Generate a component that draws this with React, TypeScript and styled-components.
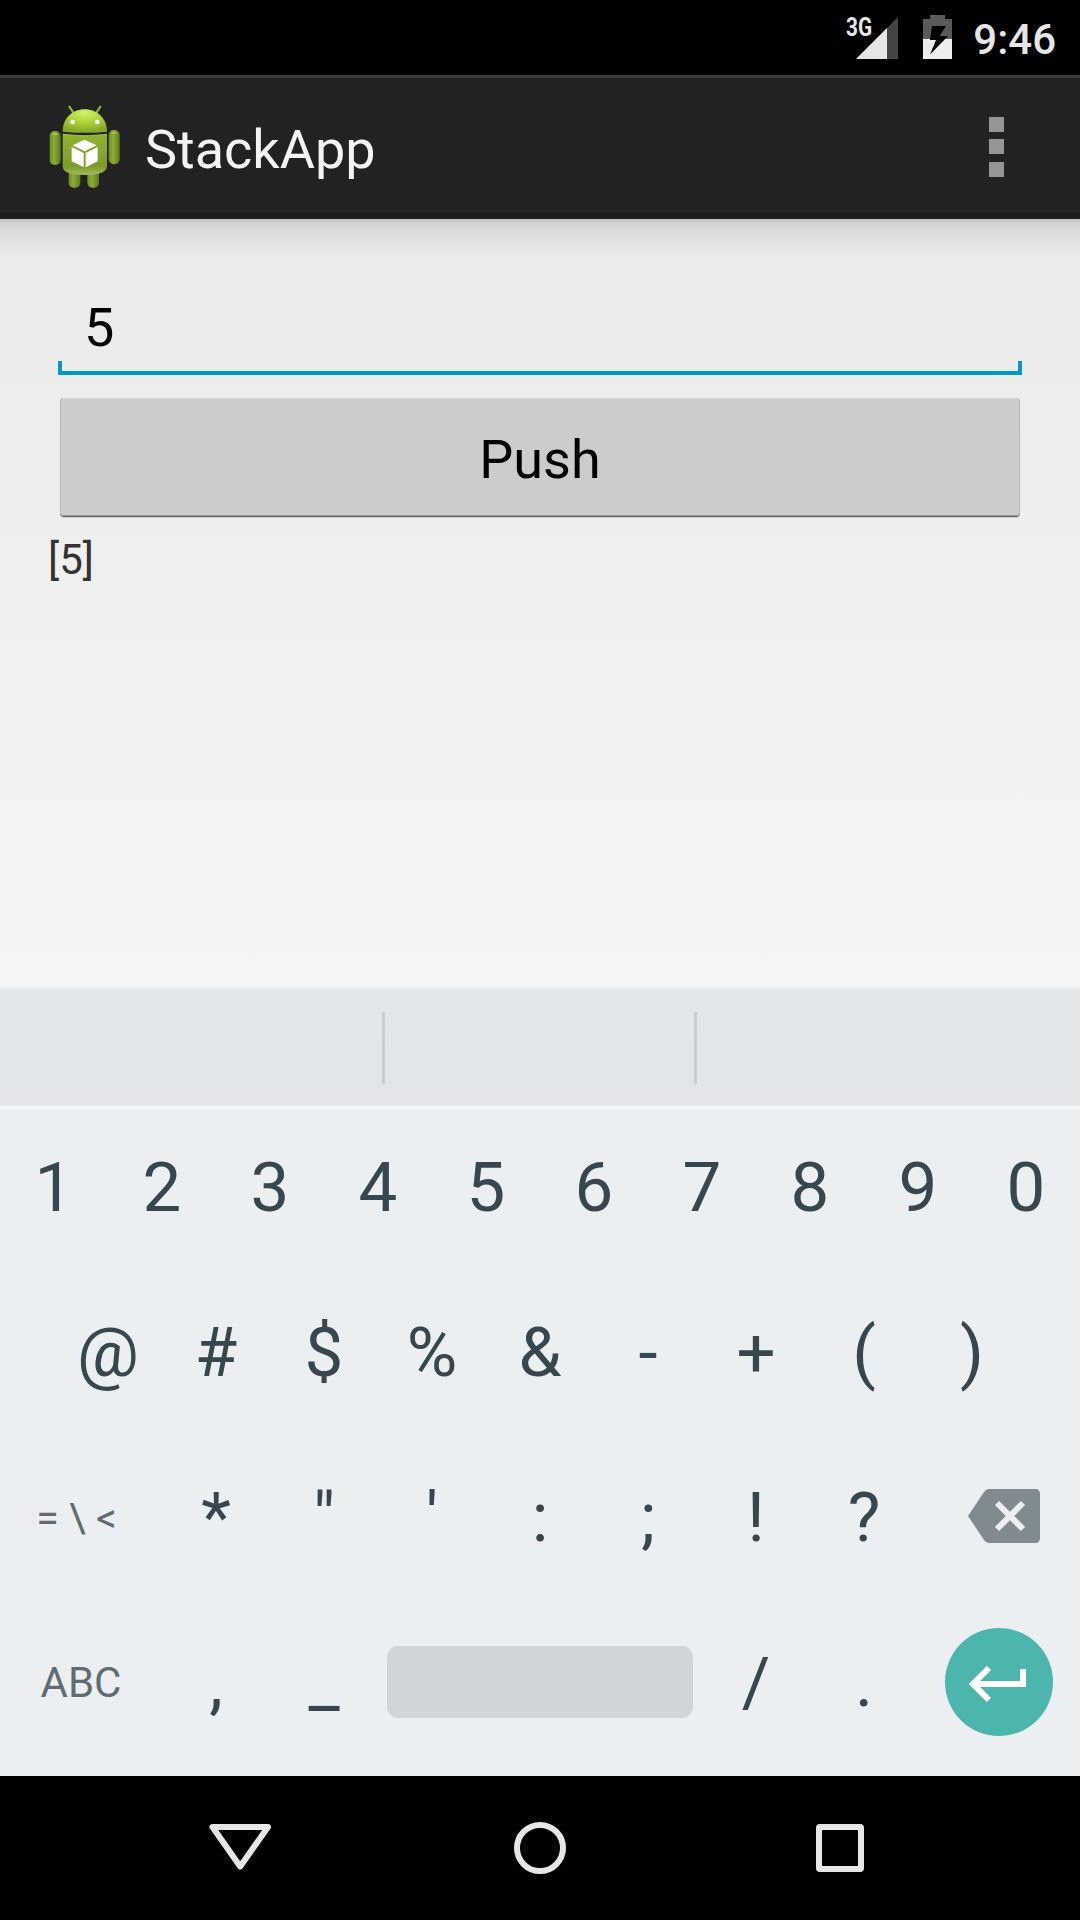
import React from "react";
import styled, { createGlobalStyle } from "styled-components";

const GlobalStyle = createGlobalStyle`
  * { box-sizing: border-box; }
  body { margin: 0; background: #000; }
`;

const Screen = styled.div`
  width: 1080px;
  height: 1920px;
  display: flex;
  flex-direction: column;
  overflow: hidden;
  font-family: Roboto, "Liberation Sans", sans-serif;
`;

const StatusBar = styled.header`
  height: 75px;
  background: #000;
  display: flex;
  justify-content: flex-end;
  padding-right: 24px;
  color: #e6e6e6;
`;

const NetworkLabel = styled.span`
  width: 10px;
  margin-top: 12px;
  font-size: 26px;
  line-height: 30px;
  font-weight: 700;
  white-space: nowrap;
  transform: scaleX(0.8);
  transform-origin: left;
`;

const SignalIcon = styled.svg`
  width: 42px;
  height: 75px;
`;

const BatteryIcon = styled.svg`
  width: 29px;
  height: 75px;
  margin: 0 21px 0 25px;
`;

const Clock = styled.span`
  font-size: 42px;
  line-height: 50px;
  margin-top: 15px;
  font-weight: 500;
`;

const ActionBar = styled.div`
  height: 144px;
  background: #222;
  border-top: 3px solid #3b3b3b;
  border-bottom: 6px solid #1b1b1b;
  display: flex;
  align-items: center;
  padding: 0 76px 0 40px;
`;

const AppIcon = styled.svg`
  width: 90px;
  height: 100px;
  margin: 0 15px 1px 0;
`;

const Title = styled.h1`
  flex: 1;
  margin: 0;
  padding-top: 8px;
  font-size: 54px;
  line-height: 64px;
  font-weight: 400;
  color: #f3f3f3;
`;

const Overflow = styled.div`
  display: grid;
  grid-template-rows: 15px 15px 15px;
  row-gap: 7.5px;
  padding-top: 2px;
`;

const Dot = styled.i`
  width: 15px;
  background: #959595;
`;

const Content = styled.main`
  height: 767px;
  padding: 72px 48px 0;
  background:
    linear-gradient(#c4c4c4 0 3px, transparent 3px),
    linear-gradient(rgba(0, 0, 0, 0.12) 0, rgba(0, 0, 0, 0.04) 20px, rgba(0, 0, 0, 0) 38px),
    linear-gradient(#eaeaea, #f5f5f5);
`;

const Field = styled.div`
  height: 84px;
  margin: 0 10px;
  padding: 5px 26px 0;
  font-size: 54px;
  line-height: 64px;
  color: #000;
  background:
    linear-gradient(#09c, #09c) left bottom / 100% 4px no-repeat,
    linear-gradient(#09c, #09c) left bottom / 4px 14px no-repeat,
    linear-gradient(#09c, #09c) right bottom / 4px 14px no-repeat;
`;

const PushButton = styled.button`
  display: block;
  width: 960px;
  height: 118px;
  margin: 23px 12px 0;
  padding: 5px 0 0;
  border: 0;
  border-radius: 4px;
  background: #ccc;
  box-shadow: inset 1px 0 #b6b6b6, inset -1px 0 #b6b6b6, inset 0 1px #d6d6d6,
    inset 0 -1px #999, 0 1px #666, 0 2px #ccc;
  font: 400 54px/64px Roboto, "Liberation Sans", sans-serif;
  color: #000;
`;

const Output = styled.p`
  margin: 19px 0 0;
  font-size: 42px;
  line-height: 50px;
  color: #333;
`;

const Suggestions = styled.div`
  height: 123px;
  border-top: 3px solid #eeeff1;
  border-bottom: 3px solid #f4f7f9;
  background: linear-gradient(#e2e7ea, #e3e5e8);
  display: flex;
  align-items: flex-start;
  padding-top: 23px;
`;

const Suggestion = styled.div<{ $w: number; $last?: boolean }>`
  width: ${(p) => p.$w}px;
  height: 72px;
  border-right: ${(p) => (p.$last ? "0" : "3px solid #c9cdd0")};
`;

const Keyboard = styled.section`
  height: 667px;
  background: #ebeff2;
  display: flex;
  flex-direction: column;
  gap: 9px;
`;

const KeyRow = styled.div`
  height: 156px;
  display: flex;
  justify-content: center;
`;

const Key = styled.div<{ $w?: number }>`
  width: ${(p) => p.$w ?? 108}px;
  padding-top: 2px;
  display: flex;
  align-items: center;
  justify-content: center;
  font-size: 69px;
  line-height: 80px;
  color: #37474f;
`;

const ModeKey = styled(Key)`
  font-size: 42px;
  color: #5f6c72;
  white-space: pre;
`;

const SymbolsKey = styled(ModeKey)`
  font-size: 41px;
  padding-right: 9px;
`;

const IconKey = styled(Key)`
  padding-top: 0;
`;

const DeleteKey = styled(IconKey)`
  padding: 0 0 2px 10px;
`;

const SpaceBar = styled.div`
  width: 306px;
  height: 72px;
  border-radius: 11px;
  background: #d1d5d8;
`;

const EnterButton = styled.div`
  width: 108px;
  height: 108px;
  border-radius: 50%;
  background: #4db6ac;
`;

const NavBar = styled.nav`
  height: 144px;
  background: #000;
  display: flex;
  justify-content: center;
`;

const NavIcon = styled.svg`
  width: 300px;
  height: 144px;
  fill: none;
  stroke: #e6e6e6;
  stroke-width: 6;
  stroke-linejoin: round;
`;

const AndroidLogo = () => (
  <AppIcon viewBox="0 0 270 300">
    <defs>
      <radialGradient id="head" cx="0.5" cy="0.15" r="0.8">
        <stop offset="0" stopColor="#d2f06a" />
        <stop offset="0.5" stopColor="#aad63a" />
        <stop offset="1" stopColor="#86a92c" />
      </radialGradient>
      <linearGradient id="body" x1="0" y1="0" x2="0" y2="1">
        <stop offset="0" stopColor="#8db32f" />
        <stop offset="0.8" stopColor="#7c9c2b" />
        <stop offset="1" stopColor="#a3bd62" />
      </linearGradient>
      <linearGradient id="limb" x1="0" y1="0" x2="1" y2="0">
        <stop offset="0" stopColor="#6f8e22" />
        <stop offset="0.4" stopColor="#8aad32" />
        <stop offset="1" stopColor="#5f7a1e" />
      </linearGradient>
    </defs>
    <path d="M88 35L100 53M181 35L169 53" stroke="#8fb52f" strokeWidth="6.5" strokeLinecap="round" />
    <rect x="86" y="210" width="35" height="68" rx="15" fill="url(#limb)" />
    <rect x="142" y="210" width="35" height="68" rx="15" fill="url(#limb)" />
    <rect x="29" y="108" width="33" height="102" rx="15" fill="url(#limb)" />
    <rect x="206" y="105" width="33" height="103" rx="15" fill="url(#limb)" />
    <path d="M35 119q10-12 21 0M212 116q10-12 21 0" fill="#a6cc48" />
    <path d="M68 110C68 70 97 43 134 43S201 70 201 110Q134 117 68 110Z" fill="url(#head)" />
    <path d="M68 116Q134 125 201 116V213Q201 240 134 240T68 213Z" fill="url(#body)" />
    <path d="M69 118Q134 127 200 118" stroke="#a5ca4c" strokeWidth="2" fill="none" />
    <circle cx="98" cy="81" r="7" fill="#fff" />
    <circle cx="172" cy="81" r="7" fill="#fff" />
    <path d="M134 134L170 151L134 169L98 151ZM95 156L131 174V217L95 199ZM173 156L137 174V217L173 199Z" fill="#fff" />
  </AppIcon>
);

const rowOne = "1234567890".split("");
const rowTwo = "@#$%&-+()".split("");
const rowThree = "*\"':;!?".split("");

export default function App() {
  return (
    <Screen>
      <GlobalStyle />
      <StatusBar>
        <NetworkLabel>3G</NetworkLabel>
        <SignalIcon viewBox="0 0 42 75">
          <path d="M0 59L42 17V59Z" fill="#444" />
          <path d="M0 59L31 28V59Z" fill="#e6e6e6" />
        </SignalIcon>
        <BatteryIcon viewBox="0 0 29 75">
          <path d="M0 19H7V15H22V19H29V39H0Z" fill="#5a5a5a" />
          <path d="M0 39H29V59H0Z" fill="#eee" />
          <path d="M9 26H23L16.500 36H25L7 54.500L13 40H7Z" fill="#000" />
        </BatteryIcon>
        <Clock>9:46</Clock>
      </StatusBar>
      <ActionBar>
        <AndroidLogo />
        <Title>StackApp</Title>
        <Overflow>
          <Dot />
          <Dot />
          <Dot />
        </Overflow>
      </ActionBar>
      <Content>
        <Field>5</Field>
        <PushButton>Push</PushButton>
        <Output>[5]</Output>
      </Content>
      <Suggestions>
        <Suggestion $w={385} />
        <Suggestion $w={312} />
        <Suggestion $w={383} $last />
      </Suggestions>
      <Keyboard>
        <KeyRow>
          {rowOne.map((k) => (
            <Key key={k}>{k}</Key>
          ))}
        </KeyRow>
        <KeyRow>
          {rowTwo.map((k) => (
            <Key key={k}>{k}</Key>
          ))}
        </KeyRow>
        <KeyRow>
          <SymbolsKey $w={162}>{"= \\ <"}</SymbolsKey>
          {rowThree.map((k) => (
            <Key key={k}>{k}</Key>
          ))}
          <DeleteKey $w={162}>
            <svg width="72" height="54" viewBox="0 0 72 54">
              <path
                d="M0 27L16 3Q18 0 21 0H67Q72 0 72 5V49Q72 54 67 54H21Q18 54 16 51Z"
                fill="#808b8f"
              />
              <path d="M29 14L55 40M55 14L29 40" stroke="#ebeff2" strokeWidth="6" />
            </svg>
          </DeleteKey>
        </KeyRow>
        <KeyRow>
          <ModeKey $w={162}>ABC</ModeKey>
          <Key>,</Key>
          <Key>_</Key>
          <IconKey $w={324}>
            <SpaceBar />
          </IconKey>
          <Key>/</Key>
          <Key>.</Key>
          <IconKey $w={162}>
            <EnterButton>
              <svg width="108" height="108" viewBox="0 0 108 108">
                <path
                  d="M44 40L28 56L44 72M28 56H78V41"
                  fill="none"
                  stroke="#fff"
                  strokeWidth="6"
                />
              </svg>
            </EnterButton>
          </IconKey>
        </KeyRow>
      </Keyboard>
      <NavBar>
        <NavIcon viewBox="0 0 300 144">
          <path d="M122.500 51H178L150.200 90.500Z" />
        </NavIcon>
        <NavIcon viewBox="0 0 300 144">
          <circle cx="150" cy="72" r="23" />
        </NavIcon>
        <NavIcon viewBox="0 0 300 144">
          <rect x="129" y="51" width="42" height="42" rx="1" />
        </NavIcon>
      </NavBar>
    </Screen>
  );
}
